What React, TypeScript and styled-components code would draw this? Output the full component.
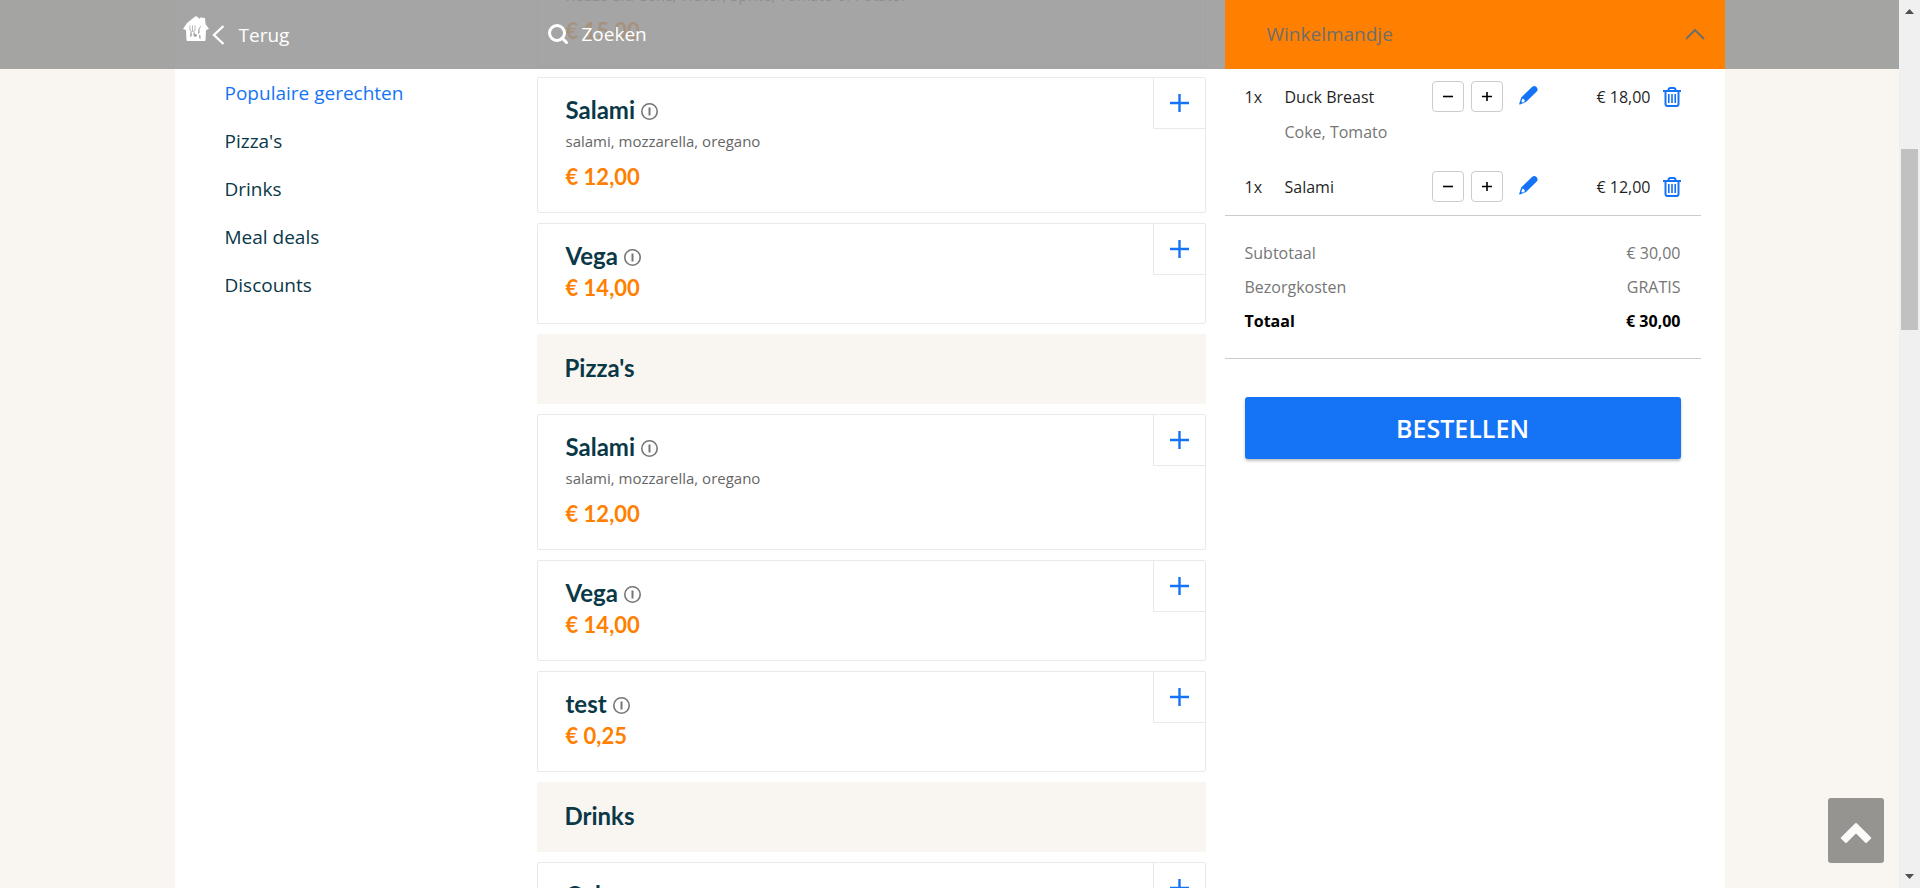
import React from "react";
import styled, { createGlobalStyle, css } from "styled-components";

const GlobalStyle = createGlobalStyle`
  *, *::before, *::after { box-sizing: border-box; }
  body { margin: 0; background: #f9f5f1; font-family: "Open Sans", "Noto Sans", sans-serif; }
  button { font: inherit; cursor: pointer; }
  h2, h3, p, ul, dl, dd, dt { margin: 0; padding: 0; }
`;

const Shell = styled.div`
  display: flex;
  height: 100vh;
  overflow: hidden;
`;

const Page = styled.div`
  position: relative;
  flex: 1;
  min-width: 0;
  overflow: hidden;
`;

const columns = css`
  display: grid;
  grid-template-columns: 362px minmax(0, 1fr) 500px;
  width: 100%;
  max-width: 1550px;
  margin: 0 auto;
`;

const Header = styled.header`
  position: absolute;
  inset: 0 0 auto 0;
  z-index: 2;
  background: rgba(149, 149, 149, 0.85);
`;

const HeaderInner = styled.div`
  ${columns}
  height: 69px;
  font-size: 19px;
  line-height: 28px;
`;

const BackLink = styled.a`
  display: flex;
  align-items: center;
  padding-left: 8px;
  color: #fff;
  text-decoration: none;

  .house { margin-bottom: 12px; }
  .chevron { margin: 0 14px 0 3px; }
`;

const SearchButton = styled.button`
  display: flex;
  align-items: center;
  justify-self: start;
  gap: 14px;
  padding: 0 0 2px 11px;
  border: 0;
  background: none;
  color: #fff;
`;

const BasketToggle = styled.button`
  display: flex;
  align-items: center;
  justify-content: space-between;
  padding: 0 20px 2px 42px;
  border: 0;
  background: #ff8000;
  color: #6e6e6e;
`;

const Main = styled.main`
  ${columns}
  height: 100%;
  background: #fff;
`;

const CategoryNav = styled.nav`
  display: flex;
  flex-direction: column;
  align-items: flex-start;
  padding: 69px 50px 0;
`;

const CategoryLink = styled.a<{ $active?: boolean }>`
  color: ${(p) => (p.$active ? "#1574f5" : "#0a3847")};
  font-size: 19px;
  line-height: 48px;
  text-decoration: none;
`;

const MenuList = styled.div`
  display: flex;
  flex-direction: column;
  gap: 10px;
  margin: -69px 19px 0 0;
`;

const titleText = css`
  color: #0a3847;
  font-family: Lato, "Open Sans", sans-serif;
  font-size: 24px;
  font-weight: 700;
  line-height: 32px;
`;

const SectionTitle = styled.h2`
  ${titleText}
  flex: none;
  padding: 18px 28px 20px;
  background: #f9f5f1;
`;

const MealCard = styled.article`
  display: flex;
  flex: none;
  justify-content: space-between;
  align-items: flex-start;
  border: 1px solid #e9e9e9;
  border-radius: 2px;
  background: #fff;
`;

const MealInfo = styled.div`
  padding: 16px 28px 19px;
`;

const MealName = styled.h3`
  ${titleText}
  display: flex;
  align-items: center;
  gap: 6px;
`;

const IconButton = styled.button`
  display: inline-flex;
  padding: 0;
  border: 0;
  background: none;
  color: #1574f5;
`;

const InfoButton = styled(IconButton)`
  padding-top: 2px;
  color: #767676;
`;

const Description = styled.p`
  padding-bottom: 5px;
  color: #666;
  font-size: 15px;
  line-height: 30px;
`;

const Price = styled.p`
  ${titleText}
  color: #ff8000;
  font-size: 22px;
`;

const AddButton = styled.button`
  display: flex;
  align-items: center;
  justify-content: center;
  width: 52px;
  height: 51px;
  padding: 0;
  border: solid #e9e9e9;
  border-width: 0 0 1px 1px;
  background: #fff;
  color: #1574f5;
`;

const Basket = styled.aside`
  padding: 69px 24px 0 0;
  color: #1f1f1f;
  font-size: 16px;
`;

const BasketItems = styled.ul`
  list-style: none;
  padding: 0 20px 13px;
  border-bottom: 1px solid #ccc;
`;

const BasketItem = styled.li`
  display: grid;
  grid-template-columns: 40px 147px 39px 48px 1fr auto 18px;
  align-items: center;
  padding-top: 12px;
`;

const QuantityButton = styled.button`
  width: 32px;
  height: 31px;
  display: flex;
  align-items: center;
  justify-content: center;
  padding: 0;
  border: 1px solid #ccc;
  border-radius: 4px;
  background: #fff;
  color: #000;
`;

const EditButton = styled(IconButton)`
  padding-bottom: 3px;
`;

const ItemPrice = styled.span`
  grid-column: 6;
  margin-right: 12px;
`;

const Extras = styled.p`
  grid-column: 2 / -1;
  padding: 5px 0 11px;
  color: #767676;
  line-height: 31px;
`;

const Totals = styled.dl`
  padding: 20px 20px 20px;
  border-bottom: 1px solid #ccc;
`;

const TotalRow = styled.div<{ $strong?: boolean }>`
  display: flex;
  justify-content: space-between;
  color: ${(p) => (p.$strong ? "#000" : "#767676")};
  font-weight: ${(p) => (p.$strong ? 700 : 400)};
  line-height: 34px;
`;

const OrderButton = styled.button`
  display: block;
  width: calc(100% - 40px);
  height: 62px;
  margin: 38px 20px 0;
  padding: 0;
  border: 0;
  border-radius: 3px;
  background: #1574f5;
  box-shadow: 0 2px 3px rgba(0, 0, 0, 0.25);
  color: #fff;
  font-size: 25px;
  font-weight: 600;
`;

const TopButton = styled.button`
  position: absolute;
  right: 15px;
  bottom: 25px;
  z-index: 3;
  display: flex;
  align-items: center;
  justify-content: center;
  width: 56px;
  height: 65px;
  padding: 4px 0 0;
  border: 0;
  border-radius: 3px;
  background: #969491;
`;

const ScrollTrack = styled.div`
  display: flex;
  flex-direction: column;
  align-items: center;
  width: 21px;
  padding: 9px 0 9px;
  background: #f0f0f0;
`;

const ScrollThumb = styled.div`
  width: 17px;
  height: 181px;
  margin: 135px 0 auto;
  background: #c1c1c1;
`;

const HouseIcon = () => (
  <svg className="house" width="26" height="26" viewBox="0 0 26 26" aria-hidden="true">
    <path fill="#fff" d="M11.500 1Q13-.5 14.500 1L17 3V1.500L22 2 22.500 8 26 13 23 14 22.500 24Q22.500 25 21.500 25H4.500Q3.500 25 3.500 24L3 14 0 13 4 7Z" />
    <path fill="none" stroke="#a5a5a5" strokeWidth=".8" d="M7 9.500V14q0 1.500 2.500 1.500T12 14V9.500M9.500 9.500v5.500" />
    <path fill="#a5a5a5" d="M7.500 16 8.800 16.500V20L7 21ZM11.500 16 10.500 16.500V20L12.300 21 14 20V18.500L12 18ZM18.500 9Q14.800 12 15 18L16.500 17Q16.200 12 18.500 9ZM16.200 18.500 17.500 19.500V23.500L16.200 22Z" />
  </svg>
);

const InfoIcon = () => (
  <svg width="17" height="17" viewBox="0 0 17 17" fill="none" stroke="currentColor" aria-hidden="true">
    <circle cx="8.500" cy="8.500" r="7.700" strokeWidth="1.600" />
    <path d="M8.500 4.500v8" strokeWidth="2" />
  </svg>
);

const PencilIcon = () => (
  <svg width="19" height="19" viewBox="0 0 19 19" aria-hidden="true">
    <path fill="currentColor" fillRule="evenodd" d="M13 1Q15.200-1 17.500 1Q19.700 3.500 17.500 5.700L7 16 1 18.400Q0 18.500.3 17.500L2.200 11.500ZM3.500 12.500 2.300 15.500 3.800 16.800 6 15Q5.500 13 3.500 12.500Z" />
  </svg>
);

const TrashIcon = () => (
  <svg width="18" height="20" viewBox="0 0 18 20" fill="none" stroke="currentColor" aria-hidden="true">
    <path strokeWidth="2" d="M0 4h18M5.500 4V3q0-2 2-2h3q2 0 2 2v1M2.500 4v13q0 2 2 2h9q2 0 2-2V4" />
    <path strokeWidth="1.600" d="M5.800 7v9M9 7v9M12.200 7v9" />
  </svg>
);

type Meal = { name: string; price: string; description?: string };

const popular: Meal[] = [
  { name: "Duck Breast", price: "€ 15,00", description: "Keuze uit: Coke, Water, Sprite, Tomato of Potato." },
  { name: "Salami", price: "€ 12,00", description: "salami, mozzarella, oregano" },
  { name: "Vega", price: "€ 14,00" },
];
const pizzas: Meal[] = [
  { name: "Salami", price: "€ 12,00", description: "salami, mozzarella, oregano" },
  { name: "Vega", price: "€ 14,00" },
  { name: "test", price: "€ 0,25" },
];
const drinks: Meal[] = [{ name: "Coke", price: "€ 2,00" }];

const categories = ["Populaire gerechten", "Pizza's", "Drinks", "Meal deals", "Discounts"];

const basket = [
  { name: "Duck Breast", extras: "Coke, Tomato", price: "€ 18,00" },
  { name: "Salami", price: "€ 12,00" },
];

const MealEntry = ({ meal }: { meal: Meal }) => (
  <MealCard>
    <MealInfo>
      <MealName>
        {meal.name}
        <InfoButton aria-label="Productinformatie"><InfoIcon /></InfoButton>
      </MealName>
      {meal.description && <Description>{meal.description}</Description>}
      <Price>{meal.price}</Price>
    </MealInfo>
    <AddButton aria-label={`${meal.name} toevoegen`}>
      <svg width="19" height="18" viewBox="0 0 19 18" stroke="currentColor" strokeWidth="2.400" aria-hidden="true">
        <path d="M9.500 0v18M0 9h19" />
      </svg>
    </AddButton>
  </MealCard>
);

export default function App() {
  return (
    <>
      <GlobalStyle />
      <Shell>
        <Page>
          <Header>
            <HeaderInner>
              <BackLink href="#terug">
                <HouseIcon />
                <svg className="chevron" width="13" height="20" viewBox="0 0 13 20" fill="none" stroke="#fff" strokeWidth="2.400" aria-hidden="true">
                  <path d="M11.500 1 2 10l9.500 9" />
                </svg>
                Terug
              </BackLink>
              <SearchButton>
                <svg width="20" height="20" viewBox="0 0 20 20" fill="none" stroke="#fff" strokeWidth="3" aria-hidden="true">
                  <circle cx="9" cy="9" r="7.500" />
                  <path d="m14 14 4.500 4.500" strokeLinecap="round" />
                </svg>
                Zoeken
              </SearchButton>
              <BasketToggle>
                Winkelmandje
                <svg width="20" height="12" viewBox="0 0 20 12" fill="none" stroke="currentColor" strokeWidth="2" aria-hidden="true">
                  <path d="M1 11l9-9 9 9" />
                </svg>
              </BasketToggle>
            </HeaderInner>
          </Header>

          <Main>
            <CategoryNav>
              {categories.map((c, i) => (
                <CategoryLink key={c} href={`#cat${i}`} $active={i === 0}>{c}</CategoryLink>
              ))}
            </CategoryNav>

            <MenuList>
              {popular.map((m) => <MealEntry key={m.name} meal={m} />)}
              <SectionTitle>Pizza's</SectionTitle>
              {pizzas.map((m) => <MealEntry key={m.name} meal={m} />)}
              <SectionTitle>Drinks</SectionTitle>
              {drinks.map((m) => <MealEntry key={m.name} meal={m} />)}
            </MenuList>

            <Basket>
              <BasketItems>
                {basket.map((item) => (
                  <BasketItem key={item.name}>
                    <span>1x</span>
                    <span>{item.name}</span>
                    <QuantityButton aria-label="Minder">
                      <svg width="10" height="9" viewBox="0 0 10 9" stroke="currentColor" strokeWidth="1.600"><path d="M0 4.500h10" /></svg>
                    </QuantityButton>
                    <QuantityButton aria-label="Meer">
                      <svg width="10" height="9" viewBox="0 0 10 9" stroke="currentColor" strokeWidth="1.600"><path d="M0 4.500h10M5 0v9" /></svg>
                    </QuantityButton>
                    <EditButton aria-label="Bewerken"><PencilIcon /></EditButton>
                    <ItemPrice>{item.price}</ItemPrice>
                    <IconButton aria-label="Verwijderen"><TrashIcon /></IconButton>
                    {item.extras && <Extras>{item.extras}</Extras>}
                  </BasketItem>
                ))}
              </BasketItems>
              <Totals>
                <TotalRow><dt>Subtotaal</dt><dd>€ 30,00</dd></TotalRow>
                <TotalRow><dt>Bezorgkosten</dt><dd>GRATIS</dd></TotalRow>
                <TotalRow $strong><dt>Totaal</dt><dd>€ 30,00</dd></TotalRow>
              </Totals>
              <OrderButton>BESTELLEN</OrderButton>
            </Basket>
          </Main>

          <TopButton aria-label="Naar boven">
            <svg width="32" height="22" viewBox="0 0 32 22" aria-hidden="true">
              <path fill="#fcfbf9" stroke="#fcfbf9" strokeWidth="2" strokeLinejoin="round" d="M16 2 30.200 16 26 20 16 10 6 20 1.800 16Z" />
            </svg>
          </TopButton>
        </Page>
        <ScrollTrack aria-hidden="true">
          <svg width="9" height="5" viewBox="0 0 9 5" fill="#505050"><path d="M4.500 0 9 5H0z" /></svg>
          <ScrollThumb />
          <svg width="9" height="5" viewBox="0 0 9 5" fill="#505050"><path d="M4.500 5 9 0H0z" /></svg>
        </ScrollTrack>
      </Shell>
    </>
  );
}
